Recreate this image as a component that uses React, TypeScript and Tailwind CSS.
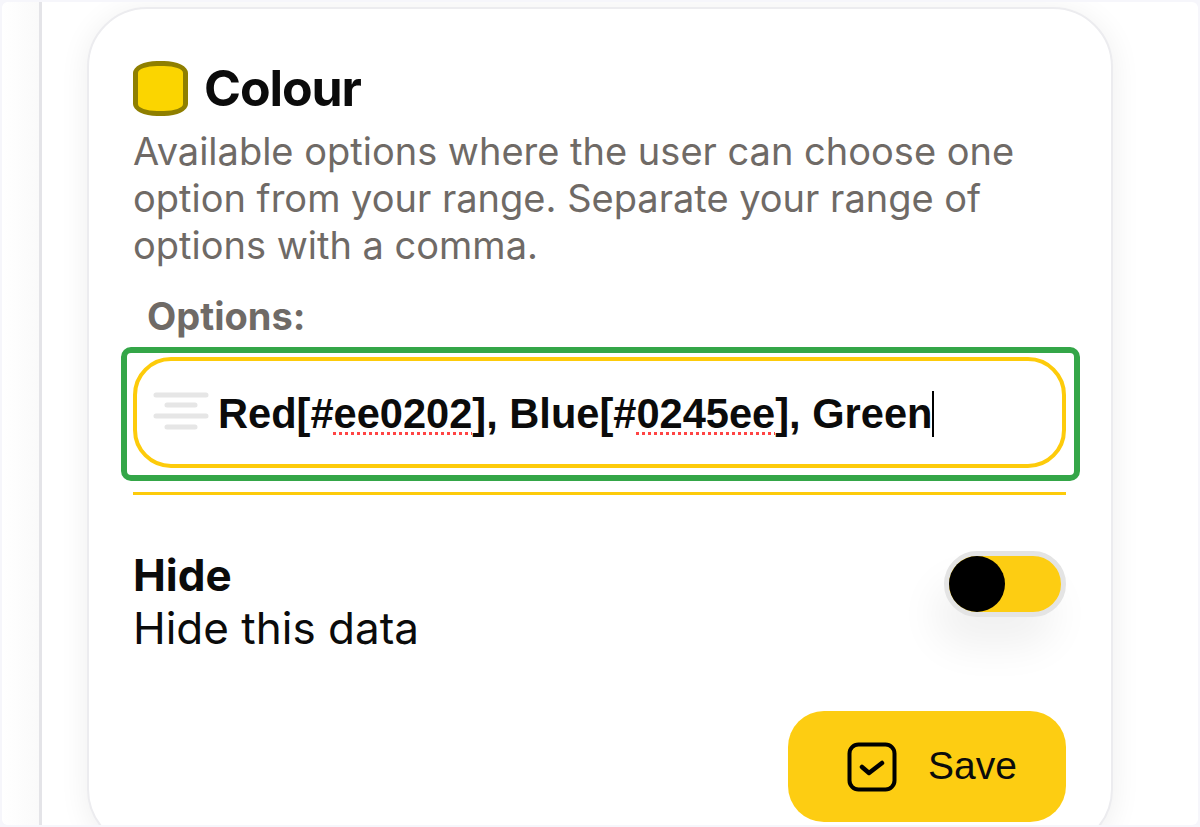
import React from 'react';

const App = () => {
  return (
    <div className="w-[1200px] h-[827px] overflow-hidden bg-[#f6f6fb] p-[2px] font-['Inter',sans-serif]">
      <div className="h-[823px] overflow-hidden flex rounded-[6px] bg-white">
        {/* Left rail */}
        <div className="w-[37px] h-full shrink-0 bg-gradient-to-r from-white to-[#fafafa] rounded-l-[6px]" />
        <div className="w-[3px] h-full shrink-0 bg-[#e4e4e8]" />

        {/* Card */}
        <div className="ml-[45px] mt-[5px] w-[1026px] h-[842px] shrink-0 rounded-[60px] border-2 border-[#ececef] bg-white shadow-[0_4px_30px_rgba(0,0,0,0.07)] pl-[44px] pr-[45px] pt-[51px]">
          {/* Title */}
          <div className="flex items-center gap-[16px] h-[56px]">
            <div className="w-[55px] h-[55px] rounded-[24px/12px] border-[5px] border-[#8f7f00] bg-[#fbd500]" />
            <h1 className="text-[50px] leading-none font-bold tracking-[-1.1px] text-[#0b0b0b]">Colour</h1>
          </div>

          <p className="mt-[12px] text-[38px] leading-[47px] text-[#6f6a66] whitespace-nowrap">
            Available options where the user can choose one<br />
            option from your range. Separate your range of<br />
            options with a comma.
          </p>

          <div className="mt-[27px] ml-[14px] text-[38px] leading-[40px] font-bold text-[#6f6a66]">Options:</div>

          {/* Highlighted input */}
          <div className="mt-[11px] -ml-[12px] -mr-[14px] h-[134px] rounded-[10px] border-[6px] border-[#34a648] pl-[6px] pr-[8px] pt-[4px]">
            <div className="h-[111px] rounded-[38px] border-[4px] border-[#fdcb0a] flex items-center pl-[16px] pt-[3px] font-['Liberation_Sans',sans-serif] font-bold text-[41.6px] text-[#0b0b0b]">
              <svg width="56" height="42" viewBox="0 0 56 42" className="shrink-0 mr-[9px] -mt-[4px]" fill="none" stroke="#e6e6e6" strokeWidth="5" strokeLinecap="round">
                <path d="M3 4h50M14 14h28M3 25h50M14 36h28" />
              </svg>
              <span className="whitespace-nowrap">
                Red[#<span className="underline decoration-dotted decoration-[#f44] decoration-[length:3px] underline-offset-[4px]">ee0202</span>], Blue[#<span className="underline decoration-dotted decoration-[#f44] decoration-[length:3px] underline-offset-[4px]">0245ee</span>], Green
              </span>
              <span className="w-[2px] h-[46px] bg-black" />
            </div>
          </div>

          <div className="mt-[11px] h-[3px] bg-[#fdcb0a]" />

          {/* Hide row */}
          <div className="mt-[56px] flex justify-between items-start">
            <div className="-mt-[2px] text-[44px] leading-[53px] text-[#0b0b0b]">
              <div className="font-bold">Hide</div>
              <div>Hide this data</div>
            </div>
            <div className="w-[122px] h-[66px] rounded-full border-[5px] border-[#e4e4e4] bg-[#fdcd12] shadow-[-10px_30px_40px_rgba(0,0,0,0.06)]">
              <div className="w-[56px] h-[56px] rounded-full bg-black" />
            </div>
          </div>

          {/* Save */}
          <div className="mt-[56px] flex justify-end">
            <button className="w-[278px] h-[111px] rounded-[36px] bg-[#fdcd12] flex items-center pl-[59px] gap-[31px] text-[39px] text-[#0b0b0b] font-['Liberation_Sans',sans-serif]">
              <svg width="50" height="50" viewBox="0 0 50 50" fill="none" stroke="#000" strokeWidth="4" strokeLinecap="round" strokeLinejoin="round">
                <rect x="2.5" y="2.5" width="45" height="45" rx="9" />
                <path d="M15 25l7 6 13-10" strokeWidth="4.5" />
              </svg>
              Save
            </button>
          </div>
        </div>
      </div>
    </div>
  );
};

export default App;
